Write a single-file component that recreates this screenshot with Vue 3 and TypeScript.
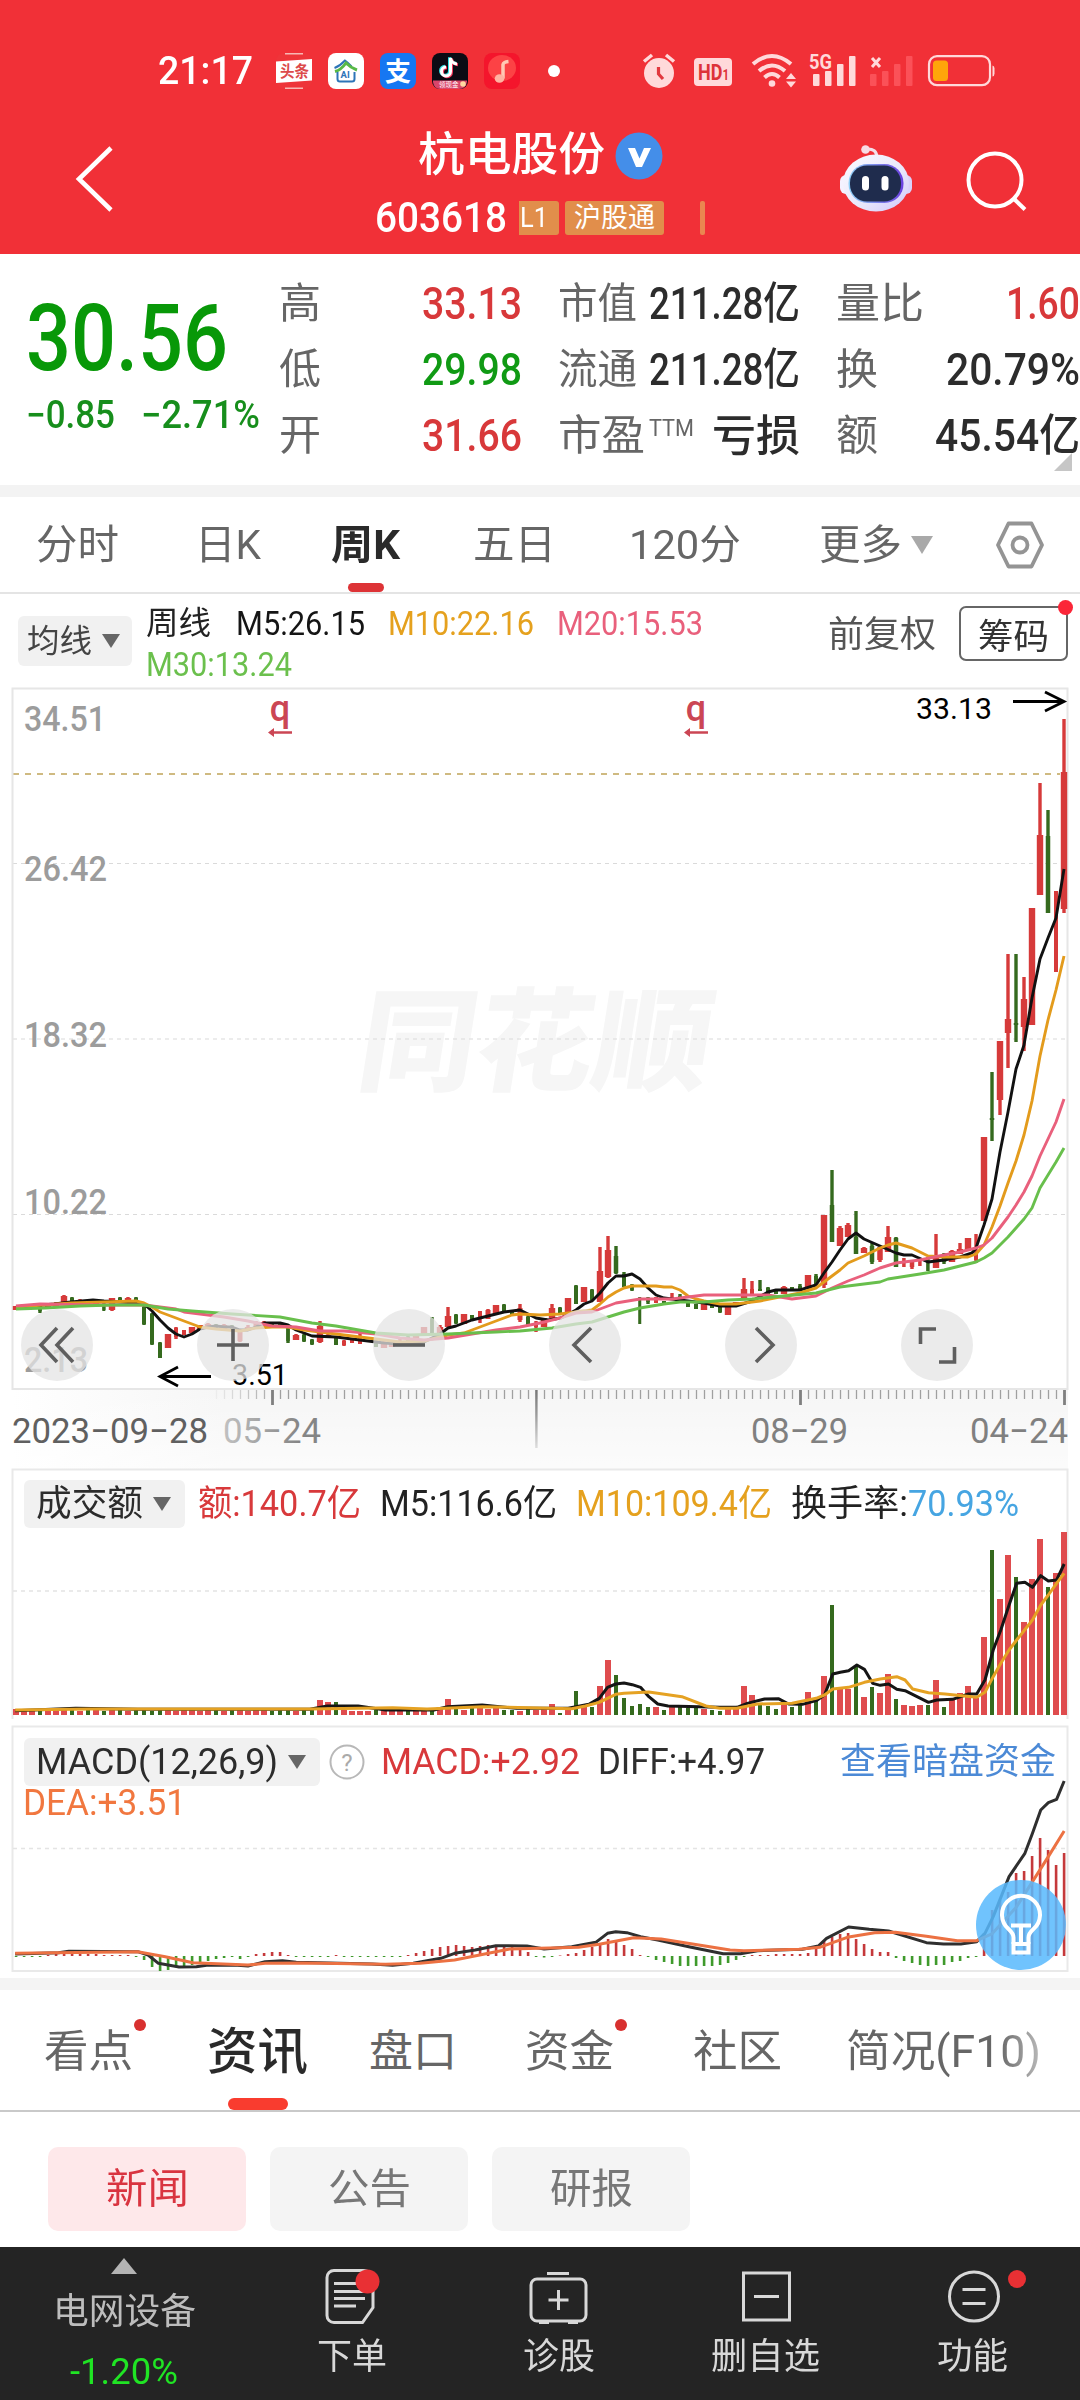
<script setup lang="ts">
import type { ObjectDirective } from 'vue'

// Condenses a run of text so that it takes exactly the given width in the flow.
const vFit: ObjectDirective<HTMLElement, number> = {
  mounted(el, { value }) {
    el.style.display = 'inline-block'
    el.style.whiteSpace = 'pre'
    el.style.flex = 'none'
    el.style.width = 'max-content'
    const natural = el.getBoundingClientRect().width
    el.style.transformOrigin = '0 50%'
    el.style.transform = `scaleX(${value / natural})`
    el.style.marginRight = `${value - natural}px`
  },
}

type Tone = 'up' | 'down' | 'ink'
interface Quote { label: string; lw: number; value: string; vw: number; tone: Tone; sup?: string; heavy?: boolean }
const quotes: Quote[] = [
  { label: '高', lw: 42, value: '33.13', vw: 100, tone: 'up' },
  { label: '市值', lw: 79, value: '211.28亿', vw: 151, tone: 'ink' },
  { label: '量比', lw: 88, value: '1.60', vw: 74, tone: 'up' },
  { label: '低', lw: 42, value: '29.98', vw: 100, tone: 'down' },
  { label: '流通', lw: 79, value: '211.28亿', vw: 151, tone: 'ink' },
  { label: '换', lw: 42, value: '20.79%', vw: 134, tone: 'ink' },
  { label: '开', lw: 42, value: '31.66', vw: 100, tone: 'up' },
  { label: '市盈', lw: 87, value: '亏损', vw: 88, tone: 'ink', sup: 'TTM', heavy: true },
  { label: '额', lw: 42, value: '45.54亿', vw: 145, tone: 'ink' },
]

const periods = [
  { label: '分时', w: 83 }, { label: '日K', w: 66 }, { label: '周K', w: 69, on: true },
  { label: '五日', w: 83 }, { label: '120分', w: 112 }, { label: '更多', w: 83, more: true },
]

const sections = [
  { label: '看点', w: 89, dot: true }, { label: '资讯', w: 101, on: true }, { label: '盘口', w: 88 },
  { label: '资金', w: 89, dot: true }, { label: '社区', w: 89 }, { label: '简况(F10)', w: 195, fade: true },
]

const STEP = 8
const LAST = 1064
const barX = (k: number) => LAST - STEP * k

// Candles from the newest week backwards: colour, high, body top, body bottom, low, body width.
type Candle = [string, number, number, number, number, number?]
const candles: Candle[] = [
  ['r', 719, 772, 909, 913], ['r', 891, 891, 972, 972, 4], ['g', 810, 836, 913, 913, 4.5], ['r', 783, 835, 895, 895],
  ['r', 908, 908, 1025, 1025], ['r', 977, 999, 1027, 1051], ['g', 954, 1023, 1025, 1042, 4.5], ['r', 954, 1019, 1033, 1068],
  ['r', 1041, 1041, 1100, 1115], ['g', 1072, 1118, 1120, 1141, 4.5], ['r', 1137, 1137, 1221, 1221], ['r', 1234, 1253, 1260, 1263, 4],
  ['r', 1238, 1238, 1250, 1250], ['r', 1243, 1249, 1254, 1254], ['r', 1250, 1251, 1262, 1262], ['g', 1253, 1254, 1262, 1264, 4.5],
  ['r', 1234, 1257, 1268, 1268], ['g', 1257, 1257, 1271, 1271, 3], ['r', 1259, 1259, 1266, 1266, 3], ['r', 1261, 1261, 1267, 1269, 4.5],
  ['r', 1258, 1258, 1267, 1267, 3], ['g', 1237, 1238, 1267, 1267, 4.5], ['r', 1226, 1237, 1252, 1252], ['r', 1247, 1247, 1260, 1262, 5.5],
  ['g', 1243, 1246, 1262, 1264, 4.5], ['r', 1247, 1248, 1253, 1253], ['g', 1211, 1237, 1254, 1254, 4.5], ['r', 1223, 1225, 1237, 1237],
  ['r', 1226, 1228, 1246, 1246], ['g', 1170, 1205, 1242, 1242, 4.5], ['r', 1215, 1215, 1285, 1288], ['g', 1274, 1276, 1284, 1284, 4],
  ['r', 1275, 1275, 1289, 1289], ['g', 1284, 1286, 1291, 1291, 4], ['g', 1287, 1287, 1291, 1291, 4], ['r', 1286, 1287, 1294, 1294],
  ['g', 1289, 1289, 1294, 1294, 4], ['g', 1287, 1288, 1294, 1294, 4], ['g', 1280, 1289, 1291, 1291, 4], ['r', 1281, 1289, 1294, 1294, 4],
  ['r', 1278, 1289, 1300, 1300], ['r', 1302, 1302, 1306, 1306], ['r', 1307, 1307, 1315, 1315], ['g', 1305, 1307, 1312, 1313, 4],
  ['g', 1304, 1304, 1308, 1308, 4], ['r', 1304, 1304, 1310, 1310], ['g', 1304, 1304, 1309, 1309, 4], ['g', 1302, 1302, 1307, 1307, 4],
  ['g', 1294, 1296, 1300, 1300, 4], ['r', 1293, 1297, 1299, 1299, 4], ['g', 1301, 1301, 1305, 1305, 4], ['r', 1297, 1297, 1303, 1303, 4],
  ['g', 1297, 1298, 1302, 1304, 3.5], ['g', 1297, 1297, 1324, 1324, 2.5], ['g', 1284, 1285, 1290, 1291, 3.5], ['g', 1272, 1274, 1287, 1287, 4],
  ['g', 1246, 1256, 1273, 1274, 4.5], ['r', 1236, 1250, 1277, 1278], ['r', 1247, 1271, 1302, 1302], ['g', 1289, 1290, 1300, 1300, 4],
  ['r', 1287, 1287, 1302, 1302], ['g', 1285, 1286, 1304, 1304, 4], ['r', 1298, 1298, 1312, 1312], ['g', 1307, 1308, 1313, 1313, 4],
  ['r', 1304, 1308, 1318, 1318], ['r', 1318, 1318, 1327, 1327], ['r', 1321, 1323, 1327, 1332, 4], ['g', 1315, 1317, 1325, 1326, 4],
  ['r', 1304, 1308, 1320, 1322, 5], ['g', 1311, 1311, 1315, 1315, 4], ['g', 1304, 1305, 1312, 1312, 4], ['r', 1305, 1305, 1314, 1314],
  ['r', 1309, 1310, 1319, 1319, 5], ['r', 1311, 1311, 1319, 1323, 4], ['g', 1315, 1315, 1321, 1321, 4], ['r', 1314, 1314, 1324, 1324],
  ['g', 1314, 1315, 1323, 1324, 4], ['r', 1307, 1316, 1327, 1327], ['r', 1325, 1327, 1333, 1333], ['g', 1317, 1319, 1333, 1333, 3.5],
  ['r', 1327, 1327, 1335, 1335], ['r', 1336, 1336, 1340, 1340], ['g', 1336, 1337, 1341, 1341, 4], ['r', 1339, 1341, 1345, 1345],
  ['r', 1341, 1342, 1347, 1347], ['r', 1341, 1342, 1348, 1348], ['g', 1340, 1341, 1347, 1347, 4], ['r', 1340, 1340, 1342, 1342],
  ['r', 1333, 1337, 1344, 1344, 4], ['r', 1339, 1339, 1343, 1343, 4], ['r', 1340, 1341, 1345, 1346, 4], ['g', 1336, 1338, 1345, 1345, 4],
  ['r', 1334, 1335, 1337, 1337], ['r', 1321, 1326, 1342, 1343], ['g', 1339, 1340, 1344, 1345, 4], ['g', 1334, 1335, 1341, 1342, 4],
  ['r', 1334, 1335, 1340, 1340], ['g', 1325, 1328, 1341, 1343, 3.5], ['g', 1323, 1324, 1328, 1328, 4], ['g', 1322, 1324, 1326, 1326, 4],
  ['r', 1321, 1323, 1326, 1326, 4], ['r', 1321, 1323, 1328, 1328, 5], ['r', 1325, 1327, 1330, 1330], ['r', 1330, 1331, 1341, 1342, 5],
  ['g', 1325, 1326, 1330, 1330, 4], ['r', 1324, 1325, 1329, 1329], ['g', 1324, 1325, 1328, 1328, 4], ['r', 1323, 1324, 1328, 1328],
  ['r', 1325, 1325, 1330, 1330], ['r', 1327, 1327, 1333, 1333], ['r', 1330, 1330, 1335, 1335, 4], ['r', 1327, 1328, 1337, 1339, 4],
  ['r', 1334, 1334, 1348, 1348], ['g', 1342, 1343, 1358, 1358, 4], ['g', 1313, 1314, 1344, 1345, 4], ['g', 1306, 1307, 1324, 1325, 4],
  ['g', 1297, 1298, 1302, 1302, 4], ['r', 1297, 1298, 1302, 1302], ['g', 1297, 1298, 1302, 1302, 4], ['r', 1298, 1298, 1310, 1311],
  ['g', 1302, 1303, 1310, 1311, 3], ['r', 1300, 1301, 1304, 1304], ['g', 1301, 1301, 1304, 1304, 4], ['r', 1299, 1301, 1304, 1304],
  ['g', 1297, 1298, 1303, 1303, 4], ['r', 1295, 1296, 1303, 1303], ['r', 1302, 1303, 1306, 1306], ['r', 1303, 1304, 1307, 1307],
  ['g', 1305, 1306, 1311, 1313, 3.5], ['r', 1305, 1305, 1308, 1308], ['r', 1304, 1304, 1308, 1308], ['r', 1306, 1306, 1310, 1310],
]
const tint = (c: string) => (c === 'r' ? '#d63a3a' : '#356a1e')
const wicks = candles.map((c, k) => ({ x: barX(k) - 1.7, y: c[1], h: c[4] - c[1], fill: tint(c[0]), w: c[5] && c[5] < 3.4 ? c[5] : 3.4 }))
const bodies = candles.map((c, k) => {
  const w = c[5] ?? 6.4
  return { x: barX(k) - w / 2, y: c[2], h: c[3] - c[2], w, fill: tint(c[0]) }
})

const averages = [
  { color: '#111', pts: '16,1307 32,1306 54,1304 71,1302 93,1300 104,1301 136,1303 144,1304 152,1311 160,1320 168,1328 176,1334 184,1337 192,1334 200,1329 208,1327 216,1326 224,1327 232,1327 240,1330 248,1330 256,1327 264,1323 280,1323 288,1325 296,1330 304,1333 312,1336 336,1337 352,1339 368,1341 384,1343 400,1344 416,1343 424,1342 432,1338 440,1334 448,1328 456,1326 472,1320 488,1316 504,1312 512,1311 520,1310 528,1314 536,1318 548,1320 561,1318 576,1310 584,1304 592,1301 600,1293 608,1283 616,1276 624,1276 632,1274 640,1279 648,1288 656,1295 664,1298 688,1301 704,1303 720,1306 736,1306 752,1301 768,1292 776,1290 800,1290 816,1285 824,1273 832,1262 840,1250 848,1239 856,1233 864,1239 880,1246 896,1253 904,1255 912,1255 928,1262 944,1260 960,1257 972,1253 976,1248 984,1225 992,1199 1000,1152 1008,1112 1016,1069 1024,1045 1032,998 1040,959 1048,938 1056,918 1064,869' },
  { color: '#e39b1c', pts: '16,1307 71,1303 104,1302 136,1301 144,1303 152,1307 160,1312 176,1318 192,1324 200,1327 216,1329 240,1331 256,1328 272,1327 288,1327 304,1330 320,1332 352,1336 376,1339 400,1342 424,1341 448,1335 464,1333 480,1327 496,1321 512,1315 520,1314 540,1315 560,1314 592,1310 600,1304 608,1297 616,1292 624,1288 632,1286 656,1286 664,1287 672,1287 680,1290 688,1296 696,1299 704,1301 720,1304 736,1304 760,1301 800,1293 816,1288 824,1282 832,1276 840,1270 848,1263 864,1256 880,1248 888,1245 896,1243 912,1248 928,1256 944,1257 968,1257 976,1254 984,1245 992,1227 1000,1206 1008,1183 1016,1161 1024,1135 1032,1101 1040,1056 1048,1020 1056,990 1064,956' },
  { color: '#e9607c', pts: '16,1306 40,1304 104,1305 144,1305 176,1309 184,1312 200,1314 224,1317 248,1321 272,1326 296,1327 320,1331 344,1331 376,1334 400,1338 424,1340 448,1338 472,1334 496,1330 520,1327 540,1323 560,1318 576,1313 592,1312 608,1306 616,1303 640,1299 672,1299 704,1295 768,1295 792,1299 816,1296 832,1288 848,1281 864,1275 880,1268 896,1263 920,1260 944,1255 960,1252 976,1248 984,1245 992,1238 1008,1217 1016,1205 1024,1192 1032,1176 1040,1156 1056,1122 1064,1099' },
  { color: '#68bf4c', pts: '16,1309 45,1308 80,1306 112,1305 144,1305 168,1309 192,1311 232,1314 280,1317 312,1323 336,1326 376,1333 408,1335 448,1334 496,1332 520,1331 552,1328 576,1324 592,1322 608,1317 624,1312 640,1308 664,1304 680,1302 704,1302 728,1300 752,1299 784,1296 816,1293 840,1287 880,1282 888,1279 920,1274 944,1270 976,1262 984,1258 992,1253 1008,1237 1024,1219 1032,1208 1040,1188 1056,1162 1064,1148' },
]

const ticks = Array.from({ length: 107 }, (_, k) => ({ x: 1064.5 - 8 * k, o: Math.min(1, Math.max(0.1, (107 - k) / 9)) }))

// Turnover per week, newest first, in pixels above the base line.
const volumes = [183, 142, 128, 176, 136, 93, 138, 160, 116, 165, 78, 17, 29, 22, 17, 8, 35, 10, 10, 9, 10, 16, 41, 22, 28, 18, 48, 26, 27, 110, 39, 15, 23, 10, 8, 13, 6, 9, 12, 20, 29, 9, 6, 4, 5, 6, 7, 7, 8, 8, 5, 8, 8, 11, 9, 17, 40, 55, 29, 8, 8, 24, 5, 2, 11, 7, 5, 6, 4, 5, 5, 9, 6, 7, 9, 5, 7, 16, 6, 5, 4, 4, 4, 4, 4, 5, 5, 4, 4, 4, 5, 13, 13, 15]
const volumeBars = candles.map((c, k) => {
  const h = volumes[k] ?? 4 + (k % 3)
  const red = k === 1 || c[0] === 'r'
  const w = red ? 6 : 4
  return { x: barX(k) - w / 2, y: 1715 - h, w, h, fill: red ? '#df4c4e' : '#356a1e' }
})

// MACD columns, newest first; negative values hang below the axis.
const macd = [103, 91, 106, 118, 100, 85, 83, 64, 56, 46, 23, -1, -2, -5, -6, -9, -9, -10, -9, -7, -5, -2, 4, 4, 7, 12, 17, 23, 22, 19, 16, 10, 3, 2, 2, 2, 2, 1, 1, 1, -1, -4, -7, -9, -10, -10, -10, -10, -10, -8, -6, -4, -1, 1, 7, 11, 14, 17, 13, 9, 6, 3, 2, 0.5, -1, -1.5, -1, 4, 6, 9, 9, 10, 11, 10, 9, 10, 11, 10, 9, 7, 5, 3, 1, -1, -1, -1, -1, -1, -1, -1, -1, 1, -1, -1, -1, -1, -1, 1, 4, 4, 3, 2, -1, -3, -1, -2, -3, -5, -8, -9, -10, -11, -14, -15, -11, -4, -1, 1, 1, 1, 1, 2, 2, 2, 2, 2, 2, 1, -1, -1, -1, -1]
const macdBars = macd.map((v, k) => ({ x: barX(k) - 1.2, y: v > 0 ? 1956 - v : 1956, h: Math.abs(v), fill: v > 0 ? '#c5393b' : '#3f9a2c' }))

const actions = ['下单', '诊股', '删自选', '功能']
const actionWidths = [70, 72, 109, 71]
</script>

<template>
  <div class="phone">
    <header class="head">
      <div class="status">
        <span v-fit="95" class="clock">21:17</span>
        <div class="apps">
          <svg width="36" height="36" viewBox="0 0 36 36"><rect width="36" height="36" rx="8" fill="#ee3439" /><path d="M9 .8h18M9 35.2h18" stroke="#f7b7b4" stroke-width="1.4" /><path d="M0 8.500 36 6v21.500L0 30z" fill="#fff" /><text x="4" y="24" font-size="16" font-weight="700" fill="#dc4a4b" textLength="29" lengthAdjust="spacingAndGlyphs">头条</text></svg>
          <svg width="36" height="36" viewBox="0 0 36 36"><rect width="36" height="36" rx="8" fill="#fff" /><path d="M6.500 15Q12 13 17 7.500q3 2 6.500 6" fill="none" stroke="#2d74b8" stroke-width="2" /><path d="M7 18.500Q13 17 18 10q5 5 11 7" fill="none" stroke="#58b947" stroke-width="3" /><path d="M9.500 19v7q0 2.500 2.500 2.500h12q2.500 0 2.500-2.500v-7" fill="none" stroke="#2d74b8" stroke-width="2" /><text x="12.500" y="25" font-size="9.500" font-weight="700" fill="#2d74b8">AI</text></svg>
          <svg width="36" height="36" viewBox="0 0 36 36"><rect width="36" height="36" rx="8" fill="#1677f2" /><text x="5" y="27.500" font-size="26" font-weight="700" fill="#fff">支</text></svg>
          <svg width="36" height="36" viewBox="0 0 36 36"><rect width="36" height="36" rx="8" fill="#0b0b14" /><path d="M1 27.500h34v1.500q-1 7-8 7H8q-6 0-7-7z" fill="#d9456a" /><g fill="none" stroke-width="3"><path d="M18.500 5v13.500a4.500 4.500 0 1 1-4.500-4.500M18.500 5q1 5.500 6.500 6" stroke="#36e0e2" transform="translate(-1 -.8)" /><path d="M18.500 5v13.500a4.500 4.500 0 1 1-4.500-4.500M18.500 5q1 5.500 6.500 6" stroke="#f5365c" transform="translate(1 .8)" /><path d="M18.500 5v13.500a4.500 4.500 0 1 1-4.500-4.500M18.500 5q1 5.500 6.500 6" stroke="#fff" /></g><text x="7" y="34" font-size="6.500" fill="#fff">领现金</text><circle cx="31" cy="31" r="2.800" fill="#ffd9a0" /></svg>
          <svg width="36" height="36" viewBox="0 0 36 36"><rect width="36" height="36" rx="8" fill="#f4152c" /><ellipse cx="18" cy="15" rx="14" ry="13" fill="#ff5550" opacity=".7" /><path d="M24.500 8.500q-5 .5-5.500 3v14" fill="none" stroke="#ffc9b4" stroke-width="3.500" /><ellipse cx="15.500" cy="25.500" rx="4.800" ry="4.300" fill="#ffb3a2" /></svg>
          <i class="more-dot"></i>
        </div>
        <div class="signals">
          <svg width="34" height="36" viewBox="0 0 34 36"><circle cx="17" cy="20" r="15" fill="#ffd9da" /><path d="M2 8.500 10 2M24 2l8 6.500" stroke="#ffd9da" stroke-width="3.500" /><path d="M16.500 14v7l4.500 5" fill="none" stroke="#e2383e" stroke-width="3.200" /></svg>
          <svg width="40" height="36" viewBox="0 0 40 36"><rect x="1" y="5" width="38" height="28" rx="4" fill="#ffd9da" /><text x="5" y="27" font-size="22" font-weight="700" fill="#dd3339" textLength="31" lengthAdjust="spacingAndGlyphs">HD<tspan font-size="14">1</tspan></text></svg>
          <svg width="46" height="36" viewBox="0 0 46 36" fill="none" stroke="#ffd9da" stroke-width="4"><path d="M2 11q19-16 38 0M8 18q13-11 26 0M13.500 24.500q7.500-7 15 0" /><circle cx="21" cy="30.500" r="3.300" fill="#ffd9da" stroke="none" /><path d="m35 26 5-6 5 6zM35 28.500h10l-5 6z" fill="#ffd9da" stroke="none" /></svg>
          <svg width="48" height="36" viewBox="0 0 48 36" fill="#ffd9da"><text x="0" y="16" font-size="21" font-weight="700" textLength="23" lengthAdjust="spacingAndGlyphs">5G</text><rect x="4" y="21" width="6.500" height="12" rx="1" /><rect x="16" y="18" width="6.500" height="15" rx="1" /><rect x="28" y="11" width="6.500" height="22" rx="1" /><rect x="40" y="3" width="6.500" height="30" rx="1" /></svg>
          <svg width="44" height="36" viewBox="0 0 44 36"><path d="m2 5 8 9M10 5l-8 9" stroke="#ffd9da" stroke-width="3" /><g fill="#ff5c63" opacity=".75"><rect y="21" width="6.500" height="12" rx="1" /><rect x="12" y="18" width="6.500" height="15" rx="1" /><rect x="24" y="11" width="6.500" height="22" rx="1" /><rect x="36" y="3" width="6.500" height="30" rx="1" /></g></svg>
          <svg width="68" height="36" viewBox="0 0 68 36"><rect x="2" y="3.200" width="61" height="29" rx="8" fill="none" stroke="#ffd9da" stroke-width="2.200" /><rect x="6" y="7.500" width="15" height="20.500" rx="3.500" fill="#ffa50a" /><path d="M65.500 12.500q2 .5 2 3v5q0 2.500-2 3z" fill="#ffd9da" /></svg>
        </div>
      </div>

      <div class="nav">
        <svg class="back" width="44" height="68" viewBox="0 0 44 68"><path d="M37 3 5 34l32 31" fill="none" stroke="#fff" stroke-width="4.600" /></svg>
        <div class="names">
          <div class="name-row">
            <span v-fit="187" class="name">杭电股份</span>
            <svg width="48" height="48" viewBox="0 0 48 48"><circle cx="24" cy="24" r="23.500" fill="#448ee9" /><path d="M13 16h7l4.500 10.500L29 16h7L27 35h-6z" fill="#fff" /></svg>
          </div>
          <div class="code-row">
            <span v-fit="132" class="code">603618</span>
            <span class="badge l1"><span v-fit="28">L1</span></span>
            <span class="badge"><span v-fit="81">沪股通</span></span>
            <i class="sliver"></i>
          </div>
        </div>
        <svg class="bot" width="74" height="70" viewBox="0 0 74 70">
          <defs>
            <linearGradient id="shell" x1="0" y1="0" x2="1" y2="1"><stop offset="0" stop-color="#fbfbff" /><stop offset=".6" stop-color="#e8e6fb" /><stop offset="1" stop-color="#cfc6fb" /></linearGradient>
            <linearGradient id="rim" x1="0" y1="0" x2="1" y2="0"><stop offset="0" stop-color="#8fd0f5" /><stop offset="1" stop-color="#6a3fe0" /></linearGradient>
          </defs>
          <path d="M27 5q11-1 11 9" fill="none" stroke="#f3dfe8" stroke-width="3" /><circle cx="26.500" cy="5.500" r="4.300" fill="#f8dbe4" />
          <rect x="1" y="31" width="12" height="19" rx="6" fill="#f4f2ff" /><rect x="61" y="31" width="12" height="19" rx="6" fill="#d9d2fb" />
          <ellipse cx="37" cy="39" rx="33" ry="28.500" fill="url(#shell)" />
          <rect x="9.500" y="20" width="55" height="39" rx="19" fill="url(#rim)" /><rect x="11" y="21.500" width="51" height="36" rx="17" fill="#1f2c4d" />
          <rect x="23" y="32" width="7" height="14.500" rx="3.500" fill="#fff" /><rect x="42.500" y="32" width="7" height="14.500" rx="3.500" fill="#fff" />
        </svg>
        <svg class="search" width="64" height="64" viewBox="0 0 64 64" fill="none" stroke="#fff" stroke-width="4"><circle cx="30" cy="30" r="26.500" /><path d="m48 48 12 11.500" /></svg>
      </div>
    </header>

    <section class="quote">
      <div class="last">
        <span v-fit="202" class="price">30.56</span>
        <div class="moves"><span v-fit="89">−0.85</span><span v-fit="119">−2.71%</span></div>
      </div>
      <div class="stats">
        <div v-for="(q, i) in quotes" :key="i" class="stat">
          <span class="key"><span v-fit="q.lw">{{ q.label }}</span><sup v-if="q.sup" v-fit="45">{{ q.sup }}</sup></span>
          <span v-fit="q.vw" :class="['val', q.tone, { heavy: q.heavy }]">{{ q.value }}</span>
        </div>
      </div>
      <svg class="corner" width="18" height="18"><path d="M18 0v18H0z" fill="#c6c6c6" /></svg>
    </section>

    <nav class="periods">
      <div v-for="p in periods" :key="p.label" :class="['period', { on: p.on }]">
        <span v-fit="p.w">{{ p.label }}</span>
        <svg v-if="p.more" width="24" height="20"><path d="M1 1h22L12 19z" fill="#a9a9a9" /></svg>
      </div>
      <svg width="50" height="48" viewBox="0 0 50 48" fill="none" stroke="#949494" stroke-width="3.800"><path d="M13.500 2.500h23L47 24 36.500 45.500h-23L3 24z" stroke-linejoin="round" /><circle cx="25" cy="24" r="7.500" /></svg>
    </nav>

    <section class="legend">
      <div class="pick ma"><span v-fit="65">均线</span><svg width="18" height="14"><path d="M0 0h18L9 14z" fill="#666" /></svg></div>
      <div class="values">
        <div class="line"><span v-fit="65" class="g1">周线</span><span v-fit="129" class="g2">M5:26.15</span><span v-fit="146" class="g3 gold">M10:22.16</span><span v-fit="146" class="pink">M20:15.53</span></div>
        <div class="line"><span v-fit="146" class="lime">M30:13.24</span></div>
      </div>
      <span v-fit="108" class="adjust">前复权</span>
      <div class="chips-btn"><span v-fit="71">筹码</span><i></i></div>
    </section>

    <section class="kline">
      <svg class="plot" width="1080" height="781" viewBox="0 688 1080 781">
        <defs>
          <linearGradient id="strip" x1="0" y1="0" x2="1" y2="0"><stop offset="0" stop-color="#fff" /><stop offset=".2" stop-color="#f6f6f6" /><stop offset="1" stop-color="#f6f6f6" /></linearGradient>
          <linearGradient id="stripFade" x1="0" y1="0" x2="0" y2="1"><stop offset="0" stop-color="#fff" stop-opacity="0" /><stop offset="1" stop-color="#fff" stop-opacity=".6" /></linearGradient>
          <linearGradient id="needle" x1="0" y1="0" x2="0" y2="1"><stop offset="0" stop-color="#777" /><stop offset=".4" stop-color="#999" /><stop offset="1" stop-color="#ddd" /></linearGradient>
          <linearGradient id="dateFade" gradientUnits="userSpaceOnUse" x1="222" y1="0" x2="300" y2="0"><stop offset="0" stop-color="#c2c2c2" /><stop offset="1" stop-color="#858585" /></linearGradient>
        </defs>
        <rect x="12" y="1390" width="1056" height="79" fill="url(#strip)" /><rect x="12" y="1390" width="1056" height="79" fill="url(#stripFade)" />
        <text transform="translate(340 1082) skewX(-9)" x="14" y="0" font-size="112" font-weight="900" fill="#f6f6f6" textLength="352" lengthAdjust="spacingAndGlyphs">同花顺</text>
        <g stroke="#dadada" stroke-width="1.200" stroke-dasharray="4 4"><path d="M13 863.500H1066M13 1039H1066M13 1214.500H1066" /></g>
        <path d="M13 774H1060" stroke="#c0a458" stroke-width="1.600" stroke-dasharray="6 6" />
        <path d="M12.500 1389V688.500H1067.500V1389z" fill="none" stroke="#e6e6e6" stroke-width="2" />
        <g font-size="35" font-weight="500" fill="#9c9c9c">
          <text x="24" y="731" textLength="82" lengthAdjust="spacingAndGlyphs">34.51</text>
          <text x="24" y="881" textLength="83" lengthAdjust="spacingAndGlyphs">26.42</text>
          <text x="24" y="1047" textLength="83" lengthAdjust="spacingAndGlyphs">18.32</text>
          <text x="24" y="1214" textLength="83" lengthAdjust="spacingAndGlyphs">10.22</text>
          <text x="24" y="1372" textLength="64" lengthAdjust="spacingAndGlyphs">2.13</text>
        </g>
        <g v-for="x in [280, 696]" :key="x" fill="#cb4654">
          <text :x="x" y="721" font-size="36" font-weight="500" text-anchor="middle">q</text>
          <path :d="`M${x - 12} 732.500l6-4.500v3.200h18v2.600h-18v3.200z`" />
        </g>
        <rect v-for="(w, i) in wicks" :key="'w' + i" :x="w.x" :y="w.y" :width="w.w" :height="w.h" :fill="w.fill" />
        <rect v-for="(b, i) in bodies" :key="'b' + i" :x="b.x" :y="b.y" :width="b.w" :height="b.h" :fill="b.fill" />
        <polyline v-for="a in averages" :key="a.color" :points="a.pts" :stroke="a.color" fill="none" stroke-width="2.900" stroke-linejoin="round" />
        <g fill="none" stroke="#000" stroke-width="2.800"><path d="M1013 701.500h50M1045 692l19 9.500-19 9.500" /><path d="M211 1376.500h-50M178 1367l-18 9.500 18 9.500" /></g>
        <g font-size="29.500" fill="#000"><text x="916" y="719" textLength="76" lengthAdjust="spacingAndGlyphs">33.13</text><text x="232" y="1385" textLength="56" lengthAdjust="spacingAndGlyphs">3.51</text></g>
        <path v-for="t in ticks" :key="t.x" :d="`M${t.x} 1390v9`" stroke="#a0a0a0" stroke-width="1.300" :opacity="t.o" />
        <path d="M272.500 1390v15M800.500 1390v15M1064.500 1390v15" stroke="#808080" stroke-width="2.800" />
        <rect x="535.200" y="1390" width="2.400" height="58" fill="url(#needle)" />
        <g font-size="35" fill="#808080">
          <text x="12" y="1442.500" fill="#606060" textLength="196" lengthAdjust="spacingAndGlyphs">2023−09−28</text>
          <text x="223" y="1442.500" fill="url(#dateFade)" textLength="98" lengthAdjust="spacingAndGlyphs">05−24</text>
          <text x="751" y="1442.500" textLength="97" lengthAdjust="spacingAndGlyphs">08−29</text>
          <text x="970" y="1442.500" textLength="98" lengthAdjust="spacingAndGlyphs">04−24</text>
        </g>
      </svg>
      <div class="tools">
        <svg viewBox="0 0 72 72"><path d="M36 19 20 36l16 17M52 19 36 36l16 17" /></svg>
        <svg viewBox="0 0 72 72"><path d="M20 36h32M36 20v32" /></svg>
        <svg viewBox="0 0 72 72"><path d="M20 36h32" /></svg>
        <svg viewBox="0 0 72 72"><path d="M42 19 25 36l17 17" /></svg>
        <svg viewBox="0 0 72 72"><path d="m31 19 17 17-17 17" /></svg>
        <svg viewBox="0 0 72 72"><path d="M19.500 35V20H35M38 53h15.500V38" /></svg>
      </div>
    </section>

    <section class="panel volume">
      <svg class="plot" width="1080" height="257" viewBox="0 1469 1080 257">
        <path d="M12.500 1719V1469.500H1067.500V1719" fill="none" stroke="#e9e9e9" stroke-width="2" />
        <path d="M13 1591H1066" stroke="#e4e4e4" stroke-width="1.600" stroke-dasharray="4 4" />
        <rect v-for="(b, i) in volumeBars" :key="i" :x="b.x" :y="b.y" :width="b.w" :height="b.h" :fill="b.fill" />
        <g transform="translate(0 1450) scale(.68878 .33333)" fill="none" stroke-width="3" stroke-linejoin="round">
          <polyline class="trend" stroke="#151515" points="22,782 110,775 200,778 450,778 475,768 520,768 560,780 630,780 650,770 700,765 750,775 825,775 855,763 870,745 882,712 894,702 906,699 918,704 930,712 942,740 955,762 970,768 1045,772 1070,772 1085,760 1110,747 1130,746 1145,762 1165,763 1185,752 1197,735 1209,672 1220,667 1232,662 1244,645 1255,658 1267,700 1278,706 1290,702 1302,718 1314,722 1348,757 1360,750 1383,748 1406,732 1418,732 1430,690 1442,600 1453,540 1465,465 1476,400 1488,397 1499,412 1511,377 1522,393 1534,390 1545,342" />
          <polyline class="trend" stroke="#e5a223" points="22,780 130,777 450,777 570,773 620,777 700,770 830,776 850,768 870,757 894,733 906,730 942,726 990,740 1025,768 1045,775 1070,775 1100,762 1150,760 1185,745 1197,735 1209,717 1232,712 1255,697 1278,687 1302,680 1314,690 1325,717 1348,728 1372,732 1418,742 1430,727 1442,680 1453,640 1465,600 1476,570 1499,510 1511,465 1522,435 1534,400 1545,370" />
        </g>
      </svg>
      <div class="row">
        <div class="pick"><span v-fit="107">成交额</span><svg width="18" height="14"><path d="M0 0h18L9 14z" fill="#666" /></svg></div>
        <span v-fit="163" class="red">额:140.7亿</span><span v-fit="177">M5:116.6亿</span><span v-fit="196" class="gold">M10:109.4亿</span>
        <span class="rate"><span v-fit="117">换手率:</span><span v-fit="111" class="sky">70.93%</span></span>
      </div>
    </section>

    <section class="panel macd">
      <svg class="plot" width="1080" height="252" viewBox="0 1726 1080 252">
        <path d="M12.500 1971V1726.500H1067.500V1971z" fill="none" stroke="#e9e9e9" stroke-width="2" />
        <path d="M13 1848.500H1066" stroke="#e4e4e4" stroke-width="1.600" stroke-dasharray="4 4" />
        <rect v-for="(b, i) in macdBars" :key="i" :x="b.x" :y="b.y" width="2.600" :height="b.h" :fill="b.fill" />
        <g transform="translate(0 1710) scale(.68878 .33333)" fill="none" stroke-width="3" stroke-linejoin="round">
          <polyline class="trend" stroke="#2f2f2f" points="22,732 85,728 100,724 200,725 215,735 230,760 260,771 285,770 300,766 345,766 360,768 385,755 410,752 430,757 540,762 570,766 600,760 640,745 660,730 690,720 720,707 765,708 790,717 830,710 865,697 882,670 894,665 910,668 930,680 955,690 1000,710 1050,731 1075,731 1100,722 1165,718 1188,708 1200,685 1232,651 1262,658 1290,663 1345,698 1370,702 1395,702 1418,695 1430,670 1442,620 1465,500 1488,430 1499,370 1511,300 1522,278 1534,268 1545,213" />
          <polyline class="trend" stroke="#ec7142" points="22,730 200,725 240,740 280,758 360,765 385,760 440,759 560,763 610,760 660,750 740,717 840,712 870,703 920,683 960,687 1060,720 1080,722 1160,718 1190,712 1230,682 1270,668 1300,667 1345,679 1390,692 1418,692 1440,672 1476,590 1499,515 1522,440 1545,363" />
        </g>
      </svg>
      <div class="row">
        <div class="pick"><span v-fit="242">MACD(12,26,9)</span><svg width="18" height="14"><path d="M0 0h18L9 14z" fill="#666" /></svg></div>
        <svg class="help" width="36" height="36" viewBox="0 0 36 36"><circle cx="18" cy="18" r="16.500" fill="none" stroke="#b8b8b8" stroke-width="2" /><text x="18" y="26.500" font-size="24" fill="#aaa" text-anchor="middle">?</text></svg>
        <span v-fit="199" class="red">MACD:+2.92</span><span v-fit="167" class="diff">DIFF:+4.97</span>
        <span v-fit="216" class="link">查看暗盘资金</span>
      </div>
      <div class="dea"><span v-fit="163">DEA:+3.51</span></div>
      <svg class="bulb" width="92" height="92" viewBox="0 0 92 92"><circle cx="46" cy="46" r="45" fill="#58b9fd" opacity=".86" /><g fill="none" stroke="#fff" stroke-width="4"><path d="M38.500 65v-6.500q0-4-5-8.500a19 19 0 1 1 25 0q-5 4.500-5 8.500V65" /><path d="M36 46.500h20M46 46.500V64M38.500 65h15v8.500h-15z" /></g></svg>
    </section>

    <nav class="sections">
      <div v-for="s in sections" :key="s.label" :class="['section', { on: s.on, fade: s.fade }]">
        <span v-fit="s.w">{{ s.label }}</span><i v-if="s.dot"></i>
      </div>
    </nav>

    <div class="filters">
      <span class="filter on"><span v-fit="83">新闻</span></span>
      <span class="filter"><span v-fit="83">公告</span></span>
      <span class="filter"><span v-fit="83">研报</span></span>
    </div>

    <footer class="dock">
      <div class="sector">
        <svg width="26" height="16"><path d="M13 0 26 16H0z" fill="#b4b4b4" /></svg>
        <span v-fit="143" class="sector-name">电网设备</span>
        <span v-fit="108" class="sector-move">-1.20%</span>
      </div>
      <div v-for="(a, i) in actions" :key="a" class="action">
        <svg width="90" height="62" viewBox="0 0 90 62" fill="none" stroke="#d8d8d8" stroke-width="3">
          <template v-if="i === 0">
            <path d="M27 5.500h29a10 10 0 0 1 10 10v27L55.500 57.500H27a7 7 0 0 1-7-7v-38a7 7 0 0 1 7-7z" /><path d="M27 18.500h22M27 26.500h31M27 33.500h31M27 41h22" />
            <circle cx="60.500" cy="16.500" r="12" fill="#e93034" stroke="none" />
          </template>
          <template v-else-if="i === 1"><rect x="17" y="14" width="55" height="42" rx="6" /><path d="M33 8.500h22M44.500 25v20M34.500 35h20M25 57.500h10M54 57.500h10" /></template>
          <template v-else-if="i === 2"><rect x="22.500" y="8" width="46" height="47" /><path d="M33 31.500h25" /></template>
          <template v-else><circle cx="46" cy="31.500" r="24.500" /><path d="M34.500 24.500h23M34.500 38.500h23" /><circle cx="89" cy="14" r="9" fill="#e93034" stroke="none" /></template>
        </svg>
        <span v-fit="actionWidths[i]">{{ a }}</span>
      </div>
    </footer>
  </div>
</template>

<style>
body { margin: 0; background: #fff; }
</style>

<style scoped>
.phone { width: 1080px; height: 2400px; overflow: hidden; display: flex; flex-direction: column; background: #fff; color: #222; font-family: Roboto, "Noto Sans CJK SC", sans-serif; font-size: 36px; }
.phone > * { flex: none; }
svg { display: block; flex: none; overflow: visible; }

.head { height: 254px; background: #f13037; color: #fff; display: flex; flex-direction: column; }
.status { height: 36px; padding: 53px 0 19px 158px; display: flex; align-items: center; }
.clock { font-size: 39px; line-height: 36px; font-weight: 500; }
.apps { display: flex; gap: 16px; margin-left: 23px; align-items: center; width: 284px; }
.more-dot { width: 12px; height: 12px; border-radius: 50%; background: #fff; margin-left: 12px; }
.signals { display: grid; grid-template-columns: 51px 58px 58px 61px 57px 68px; margin-left: 82px; }
.nav { height: 146px; display: flex; align-items: flex-start; }
.back { margin: 37px 0 0 74px; }
.names { margin-left: 257px; width: 465px; }
.name-row { display: flex; align-items: center; height: 72px; margin-top: 6px; margin-left: 43px; gap: 10px; }
.name { font-size: 46px; line-height: 60px; font-weight: 500; margin-top: 8px; }
.name-row svg { margin-top: 12px; }
.code-row { display: flex; align-items: center; height: 34px; margin-top: 15px; }
.code { font-size: 42px; line-height: 36px; font-weight: 500; }
.badge { height: 34px; padding: 0 9px; background: #e18e4b; border-radius: 3px; font-size: 27px; line-height: 35px; margin-left: 6px; display: block; }
.badge.l1 { margin-left: 12px; padding: 0 11px 0 1px; border-radius: 0 3px 3px 0; }
.sliver { width: 5px; height: 34px; background: #ea8650; border-radius: 2px; margin-left: 36px; }
.bot { margin-top: 36px; margin-left: -1px; }
.search { margin: 42px 0 0 52px; }

.quote { height: 231px; display: flex; position: relative; }
.last { width: 281px; padding-top: 39px; box-sizing: border-box; padding-left: 26px; color: #089808; }
.price { font-size: 92px; line-height: 92px; font-weight: 500; }
.moves { display: flex; gap: 26px; font-size: 38px; line-height: 40px; margin-top: 10px; font-weight: 500; color: #178e1c; }
.stats { width: 799px; padding-top: 17px; display: grid; grid-template-columns: 241px 240px 242px; column-gap: 38px; grid-auto-rows: 66px; }
.stat { display: flex; justify-content: space-between; align-items: center; }
.key { display: flex; font-size: 42px; line-height: 66px; color: #666; margin-left: -2px; }
.key sup { font-size: 23px; line-height: 30px; margin-left: 4px; margin-top: 11px; vertical-align: top; }
.val { font-size: 44px; line-height: 66px; font-weight: 500; }
.up { color: #d8383a; }
.down { color: #109a14; }
.ink { color: #2c2c2c; }
.heavy { font-size: 43px; font-weight: 500; }
.corner { position: absolute; right: 8px; top: 199px; }

.periods { height: 95px; border-top: 12px solid #f3f3f3; border-bottom: 2px solid #e4e4e4; padding-left: 36px; display: grid; grid-template-columns: 159px 136px 142px 156px 190px 176px 50px; align-items: center; }
.period { height: 95px; line-height: 100px; font-size: 41px; color: #666; display: flex; align-items: center; position: relative; }
.period svg { margin-left: 8px; }
.period.on { color: #2a2a2a; font-weight: 700; }
.period.on::after { content: ""; position: absolute; left: 17px; bottom: 0; width: 36px; height: 9px; border-radius: 5px; background: #dd3336; }

.legend { height: 94px; display: flex; }
.pick { display: flex; align-items: center; background: #f1f1f1; border-radius: 6px; height: 48px; padding: 0 12px; gap: 10px; box-sizing: border-box; color: #2c2c2c; }
.pick.ma { margin: 22px 0 0 18px; height: 50px; width: 114px; padding: 0 9px; font-size: 32px; line-height: 50px; color: #444; }
.values { margin: 9px 0 0 14px; width: 682px; font-size: 34px; }
.line { display: flex; height: 41px; line-height: 41px; }
.g1 { font-size: 32px; }
.line > span { position: relative; }
.g2 { left: 25px; color: #151515; }
.g3 { left: 48px; }
.pink { left: 71px; color: #e9607c; }
.lime { color: #6bc04d; }
.gold { color: #e5a11e; }
.adjust { margin-top: 15px; line-height: 52px; font-size: 36px; color: #555; }
.chips-btn { position: relative; margin: 12px 0 0 23px; width: 109px; height: 55px; box-sizing: border-box; border: 2px solid #666; border-radius: 7px; display: flex; justify-content: center; align-items: center; font-size: 35px; color: #333; }
.chips-btn i { position: absolute; right: -7px; top: -8px; width: 15px; height: 15px; border-radius: 50%; background: #fb2638; }

.kline { height: 781px; position: relative; }
.plot { position: absolute; left: 0; top: 0; font-family: Roboto, "Noto Sans CJK SC", sans-serif; }
.tools { position: absolute; left: 21px; top: 621px; display: flex; gap: 104px; }
.tools svg { width: 72px; height: 72px; border-radius: 50%; background: rgba(228, 228, 228, .75); fill: none; stroke: #5f5f5f; stroke-width: 3.6; }

.panel { position: relative; }
.volume { height: 257px; }
.macd { height: 252px; }
.trend { vector-effect: non-scaling-stroke; }
.row { position: relative; display: flex; align-items: center; height: 48px; line-height: 48px; padding-left: 24px; font-size: 36px; }
.volume .row { padding-top: 11px; display: grid; grid-template-columns: 174px 182px 196px 215px auto; }
.volume .pick { width: 161px; }
.red { color: #d8393b; }
.sky { color: #46a5e2; }
.rate { display: flex; }
.macd .row { padding-top: 12px; display: grid; grid-template-columns: 305px 52px 217px 242px auto; }
.macd .pick { width: 296px; padding-right: 10px; }
.diff { color: #2f2f2f; }
.link { color: #4c8ad6; }
.dea { position: relative; color: #f1773f; padding-left: 23px; line-height: 36px; height: 36px; margin-top: -1px; font-size: 36px; }
.bulb { position: absolute; left: 975px; top: 153px; }

.sections { height: 120px; border-top: 12px solid #f4f4f4; border-bottom: 2px solid #c9c9c9; padding-left: 44px; display: grid; grid-template-columns: 163px 162px 156px 168px 153px auto; }
.section { height: 120px; line-height: 125px; font-size: 44px; color: #666; display: flex; position: relative; }
.section.on { color: #2a2a2a; font-weight: 500; font-size: 50px; }
.section.on::after { content: ""; position: absolute; left: 21px; bottom: 0; width: 60px; height: 12px; border-radius: 6px; background: #f93c2f; }
.section i { width: 12px; height: 12px; border-radius: 50%; background: #d8302f; margin: 29px 0 0 1px; }
.fade span { background: linear-gradient(90deg, #666 78%, #bbb); background-clip: text; -webkit-background-clip: text; color: transparent; }

.filters { display: flex; gap: 24px; padding: 35px 0 0 48px; height: 100px; }
.filter { width: 198px; height: 84px; line-height: 84px; border-radius: 10px; background: #f4f4f4; color: #777; display: flex; justify-content: center; align-items: center; font-size: 41px; }
.filter.on { background: #fee8ea; color: #d93440; }

.dock { height: 153px; background: #242424; color: #d8d8d8; display: grid; grid-template-columns: 248px 207px 207px 207px 207px; }
.sector { display: flex; flex-direction: column; align-items: center; padding-top: 11px; }
.sector-name { font-size: 36px; line-height: 40px; margin-top: 18px; color: #bdbdbd; }
.sector-move { font-size: 36px; line-height: 36px; margin-top: 22px; color: #20e424; }
.action { display: flex; flex-direction: column; align-items: center; padding-top: 18px; font-size: 36px; line-height: 40px; }
.action > span { margin-top: 10px; }
</style>
